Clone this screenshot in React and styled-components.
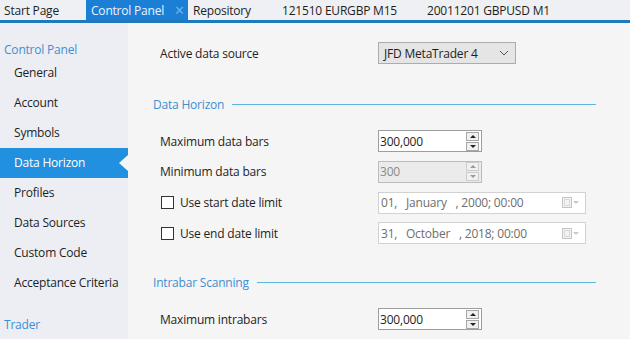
import styled, { createGlobalStyle } from "styled-components";

const GlobalStyle = createGlobalStyle`
  html, body {
    margin: 0;
    padding: 0;
    background: #f5f5f5;
  }
  body {
    font-family: "Open Sans", "Noto Sans", "Liberation Sans", sans-serif;
    font-size: 12px;
    color: #1e1e1e;
  }
`;

const Window = styled.div`
  display: flex;
  flex-direction: column;
  width: 630px;
  height: 339px;
  overflow: hidden;
`;

const TabBar = styled.div`
  display: flex;
  align-items: stretch;
  height: 20px;
  background: #eef0f3;
  border-bottom: 3px solid #1e79be;
`;

const Tab = styled.div`
  display: flex;
  align-items: center;
  gap: 8px;
  padding: 0 ${(p) => (p.$active ? "3px" : "0")} 0 ${(p) => p.$pl}px;
  width: ${(p) => p.$w}px;
  box-sizing: border-box;
  background: ${(p) => (p.$active ? "#1c7fd6" : "transparent")};
  color: ${(p) => (p.$active ? "#eaf4ff" : "#1e1e1e")};
  letter-spacing: -0.2px;
  white-space: nowrap;
`;

const Close = styled.span`
  margin-left: auto;
  color: #6cb2ec;
  font-size: 13px;
  line-height: 1;
`;

const Body = styled.div`
  display: flex;
  flex: 1;
  min-height: 0;
`;

const Sidebar = styled.nav`
  width: 128px;
  flex-shrink: 0;
  background: #eceef4;
  padding-top: 19px;
  display: flex;
  flex-direction: column;
`;

const NavHeader = styled.div`
  height: 16px;
  line-height: 16px;
  padding-left: 4px;
  color: #3d8fd1;
  letter-spacing: -0.2px;
  margin-top: ${(p) => p.$mt || 0}px;
`;

const NavItem = styled.div`
  position: relative;
  height: 30px;
  line-height: 30px;
  padding-left: 14px;
  letter-spacing: -0.2px;
  background: ${(p) => (p.$active ? "#2090df" : "transparent")};
  color: ${(p) => (p.$active ? "#ffffff" : "#1e1e1e")};

  &::after {
    content: "";
    display: ${(p) => (p.$active ? "block" : "none")};
    position: absolute;
    right: 0;
    top: 7px;
    border-top: 8px solid transparent;
    border-bottom: 8px solid transparent;
    border-right: 9px solid #f5f5f5;
  }
`;

const Content = styled.main`
  flex: 1;
  padding: 15px 34px 0 25px;
  display: flex;
  flex-direction: column;
`;

const Row = styled.div`
  display: grid;
  grid-template-columns: 218px auto;
  align-items: center;
  height: ${(p) => p.$h || 30}px;
  padding-left: 7px;
`;

const Label = styled.label`
  display: flex;
  align-items: center;
  gap: 6px;
  letter-spacing: -0.2px;
  white-space: nowrap;
`;

const Check = styled.span`
  width: 11px;
  height: 11px;
  border: 1px solid #333;
  background: #fff;
  margin-left: 1px;
`;

const SectionHeader = styled.div`
  display: flex;
  align-items: center;
  gap: 8px;
  height: 16px;
  margin: ${(p) => p.$mt || 28}px 0 14px;
  color: #3d8fd1;
  letter-spacing: -0.2px;

  &::after {
    content: "";
    flex: 1;
    height: 1px;
    background: #5cb7da;
  }
`;

const Select = styled.div`
  display: flex;
  align-items: center;
  justify-content: space-between;
  width: 138px;
  height: 22px;
  box-sizing: border-box;
  padding: 0 6px 0 5px;
  background: #e5e5e5;
  border: 1px solid #acacac;
  letter-spacing: -0.2px;
`;

const SpinBox = styled.div`
  display: flex;
  align-items: center;
  justify-content: space-between;
  width: 104px;
  height: 22px;
  box-sizing: border-box;
  padding: 0 1px;
  background: ${(p) => (p.$disabled ? "#ebebeb" : "#ffffff")};
  border: 1px solid ${(p) => (p.$disabled ? "#bcbcbc" : "#9d9d9d")};
  color: ${(p) => (p.$disabled ? "#8a8a8a" : "#1e1e1e")};
  letter-spacing: -0.2px;
`;

const Spinner = styled.div`
  display: flex;
  flex-direction: column;
  gap: 1px;
  width: 13px;
  margin-right: 1px;
`;

const SpinButton = styled.div`
  display: flex;
  align-items: center;
  justify-content: center;
  height: 9px;
  box-sizing: border-box;
  background: #f0f0f0;
  border: 1px solid ${(p) => (p.$disabled ? "#cdcdcd" : "#a6a6a6")};

  &::before {
    content: "";
    border-left: 3px solid transparent;
    border-right: 3px solid transparent;
    ${(p) => (p.$down ? "border-top" : "border-bottom")}: 3px solid
      ${(p) => (p.$disabled ? "#9a9a9a" : "#222")};
  }
`;

const DatePicker = styled.div`
  display: flex;
  align-items: center;
  width: 208px;
  height: 22px;
  box-sizing: border-box;
  padding: 0 6px 0 2px;
  background: #ffffff;
  border: 1px solid #d2d2d2;
  color: #6e6e6e;
  letter-spacing: -0.2px;
  white-space: pre;
`;

const PickerIcons = styled.div`
  margin-left: auto;
  display: flex;
  align-items: center;
`;

function Chevron() {
  return (
    <svg width="10" height="6" viewBox="0 0 10 6">
      <path d="M1 1 L5 5 L9 1" fill="none" stroke="#555" strokeWidth="1" />
    </svg>
  );
}

function CalendarIcon() {
  return (
    <svg width="17" height="11" viewBox="0 0 17 11">
      <rect x="0.5" y="0.5" width="9" height="10" fill="#f4f4f4" stroke="#c4c4c4" />
      <rect x="2.5" y="2.5" width="5" height="6" fill="none" stroke="#d8d8d8" />
      <path d="M11 4 L17 4 L14 7 Z" fill="#c8c8c8" />
    </svg>
  );
}

function NumberInput({ value, disabled }) {
  return (
    <SpinBox $disabled={disabled}>
      <span>{value}</span>
      <Spinner>
        <SpinButton $disabled={disabled} />
        <SpinButton $disabled={disabled} $down />
      </Spinner>
    </SpinBox>
  );
}

const tabs = [
  { label: "Start Page", pl: 4, w: 86 },
  { label: "Control Panel", pl: 5, w: 102, active: true },
  { label: "Repository", pl: 5, w: 94 },
  { label: "121510 EURGBP M15", pl: 0, w: 145 },
  { label: "20011201 GBPUSD M1", pl: 0, w: 180 },
];

const navItems = [
  "General",
  "Account",
  "Symbols",
  "Data Horizon",
  "Profiles",
  "Data Sources",
  "Custom Code",
  "Acceptance Criteria",
];

export default function App() {
  return (
    <>
      <GlobalStyle />
      <Window>
        <TabBar>
          {tabs.map((t) => (
            <Tab key={t.label} $active={t.active} $pl={t.pl} $w={t.w}>
              {t.label}
              {t.active && <Close>✕</Close>}
            </Tab>
          ))}
        </TabBar>

        <Body>
          <Sidebar>
            <NavHeader>Control Panel</NavHeader>
            {navItems.map((item) => (
              <NavItem key={item} $active={item === "Data Horizon"}>
                {item}
              </NavItem>
            ))}
            <NavHeader $mt={19}>Trader</NavHeader>
          </Sidebar>

          <Content>
            <Row>
              <Label>Active data source</Label>
              <Select>
                <span>JFD MetaTrader 4</span>
                <Chevron />
              </Select>
            </Row>

            <SectionHeader>Data Horizon</SectionHeader>
            <Row>
              <Label>Maximum data bars</Label>
              <NumberInput value="300,000" />
            </Row>
            <Row $h={31}>
              <Label>Minimum data bars</Label>
              <NumberInput value="300" disabled />
            </Row>
            <Row $h={31}>
              <Label>
                <Check />
                Use start date limit
              </Label>
              <DatePicker>
                {"01,   January   , 2000; 00:00"}
                <PickerIcons>
                  <CalendarIcon />
                </PickerIcons>
              </DatePicker>
            </Row>
            <Row>
              <Label>
                <Check />
                Use end date limit
              </Label>
              <DatePicker>
                {"31,   October   , 2018; 00:00"}
                <PickerIcons>
                  <CalendarIcon />
                </PickerIcons>
              </DatePicker>
            </Row>

            <SectionHeader $mt={26}>Intrabar Scanning</SectionHeader>
            <Row>
              <Label>Maximum intrabars</Label>
              <NumberInput value="300,000" />
            </Row>
          </Content>
        </Body>
      </Window>
    </>
  );
}
